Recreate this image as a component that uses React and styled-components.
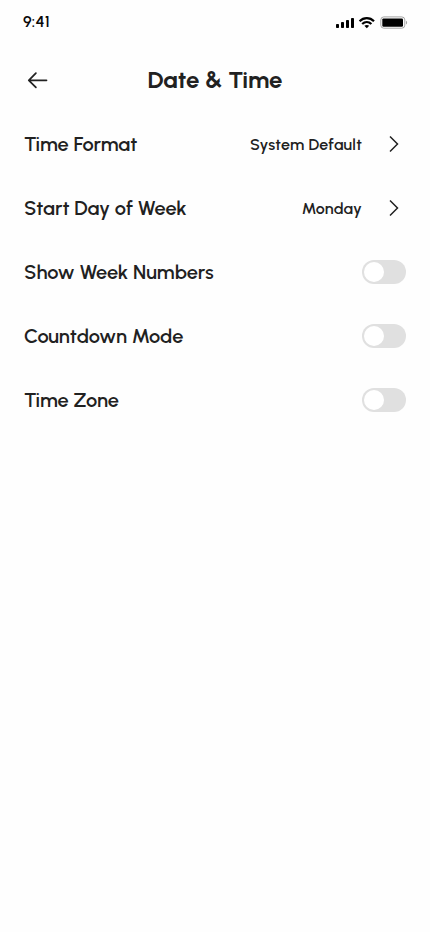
import React from "react";
import styled, { createGlobalStyle } from "styled-components";

const GlobalStyle = createGlobalStyle`
  * { box-sizing: border-box; }
  body {
    margin: 0;
    background: #fefefe;
    color: #212121;
    font-family: "Urbanist", "Lato", "Liberation Sans", sans-serif;
  }
  button { font: inherit; }
`;

const Screen = styled.div`
  width: 430px;
  height: 932px;
  display: flex;
  flex-direction: column;
  background: #fefefe;
`;

const StatusBar = styled.div`
  height: 44px;
  padding: 0 22px 0 23px;
  display: flex;
  align-items: center;
  justify-content: space-between;
`;

const Clock = styled.span`
  font-size: 16px;
  font-weight: 600;
  line-height: 20px;
  letter-spacing: 0.2px;
  color: #090909;
`;

const StatusIcons = styled.svg`
  width: 72px;
  height: 14px;
  display: block;
`;

const Header = styled.header`
  height: 48px;
  margin-top: 12px;
  padding: 0 24px;
  display: grid;
  grid-template-columns: 28px 1fr 28px;
  align-items: center;
`;

const BackButton = styled.button`
  width: 28px;
  height: 28px;
  padding: 0;
  border: 0;
  background: none;
  color: #212121;
`;

const BackArrow = styled.svg`
  width: 28px;
  height: 28px;
  display: block;
`;

const Title = styled.h1`
  margin: 0;
  text-align: center;
  font-size: 24px;
  font-weight: 700;
  line-height: 28px;
  white-space: nowrap;
`;

const List = styled.main`
  padding: 28px 24px 0;
  display: flex;
  flex-direction: column;
  gap: 40px;
`;

const Row = styled.div`
  height: 24px;
  display: flex;
  align-items: center;
`;

const Label = styled.span`
  flex: 1;
  font-size: 20px;
  font-weight: 600;
  line-height: 24px;
  white-space: nowrap;
`;

const Value = styled.span`
  margin-right: 20px;
  padding-top: 2px;
  font-size: 16px;
  font-weight: 600;
  line-height: 22px;
  white-space: nowrap;
  letter-spacing: 0.2px;
`;

const Chevron = styled.svg`
  width: 24px;
  height: 24px;
  display: block;
`;

const Toggle = styled.button`
  width: 44px;
  height: 24px;
  padding: 2px;
  border: 0;
  border-radius: 12px;
  background: #e0e0e0;
  display: flex;
`;

const Knob = styled.span`
  width: 20px;
  height: 20px;
  border-radius: 50%;
  background: #fff;
`;

const rows = [
  { label: "Time Format", value: "System Default" },
  { label: "Start Day of Week", value: "Monday" },
  { label: "Show Week Numbers" },
  { label: "Countdown Mode" },
  { label: "Time Zone" },
];

export default function App() {
  return (
    <Screen>
      <GlobalStyle />
      <StatusBar>
        <Clock>9:41</Clock>
        <StatusIcons viewBox="0 0 72 14" fill="#000" aria-hidden="true">
          <rect x="0" y="9" width="3" height="4" rx="0.8" />
          <rect x="5" y="7" width="3" height="6" rx="0.8" />
          <rect x="10" y="5" width="3" height="8" rx="0.8" />
          <rect x="15" y="3" width="3" height="10" rx="0.8" />
          <g fill="none" stroke="#000" strokeWidth="2.2">
            <path d="M23.6 6.2C27.7 2.1 33.9 2.1 38 6.2" />
            <path d="M26.2 9C28.9 6.4 32.7 6.4 35.4 9" />
          </g>
          <path d="M28.4 10.8C29.8 9.7 31.8 9.7 33.2 10.8L30.8 13.2Z" />
          <rect x="44.8" y="1.9" width="24" height="11.3" rx="3" fill="none" stroke="#a4a4a4" />
          <rect x="46.3" y="3.4" width="20.7" height="8.3" rx="1.2" />
          <path d="M70 5.7C71.5 6.3 71.5 8.8 70 9.4Z" fill="#a4a4a4" />
        </StatusIcons>
      </StatusBar>
      <Header>
        <BackButton aria-label="Back">
          <BackArrow
            viewBox="0 0 28 28"
            fill="none"
            stroke="currentColor"
            strokeWidth="1.75"
            strokeLinecap="round"
            strokeLinejoin="round"
          >
            <path d="M22.5 14.3H4.8M11.9 7.2L4.8 14.3L11.9 21.4" />
          </BackArrow>
        </BackButton>
        <Title>Date &amp; Time</Title>
      </Header>
      <List>
        {rows.map((r) => (
          <Row key={r.label}>
            <Label>{r.label}</Label>
            {r.value ? (
              <>
                <Value>{r.value}</Value>
                <Chevron viewBox="0 0 24 24" fill="none" stroke="#212121" strokeWidth="1.5">
                  <path d="M8 4.5L15.5 12L8 19.5" />
                </Chevron>
              </>
            ) : (
              <Toggle role="switch" aria-checked="false" aria-label={r.label}>
                <Knob />
              </Toggle>
            )}
          </Row>
        ))}
      </List>
    </Screen>
  );
}
